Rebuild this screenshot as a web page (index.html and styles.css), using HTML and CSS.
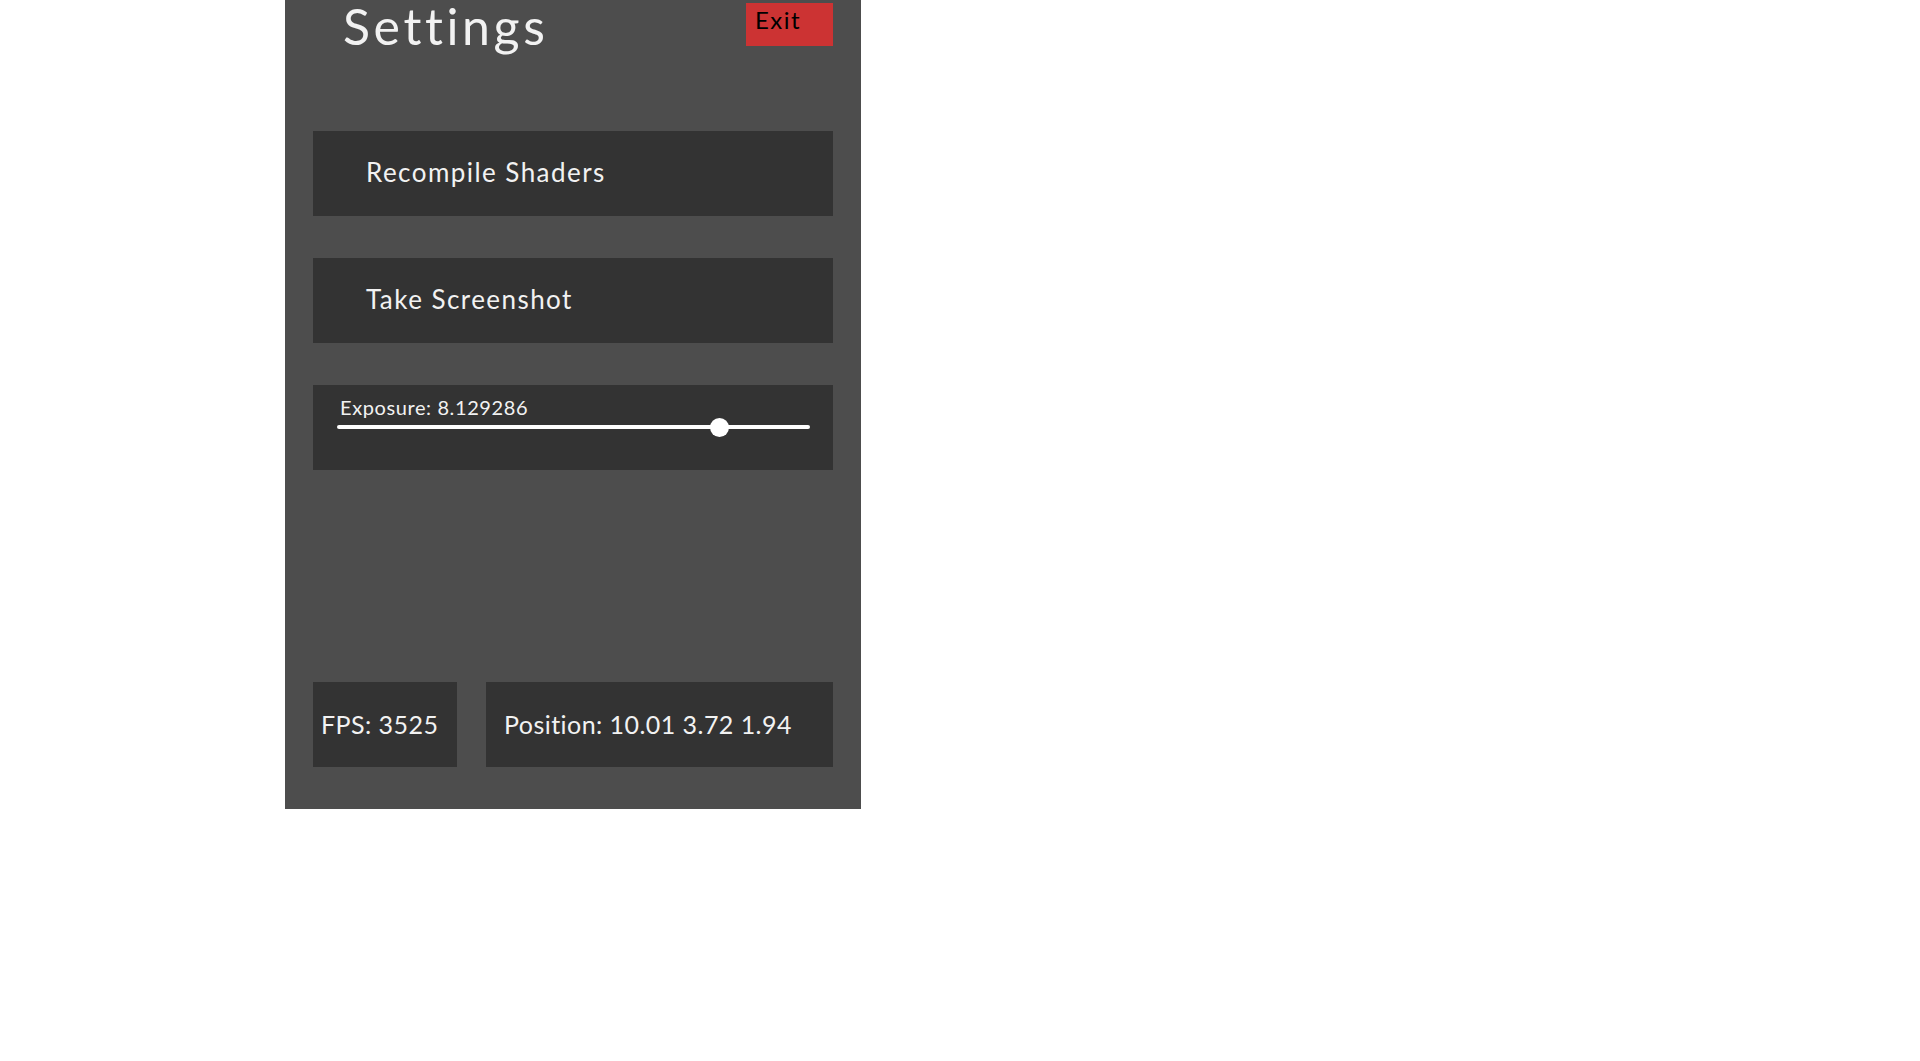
FILE: index.html
```html
<!DOCTYPE html>
<html>
<head>
<meta charset="utf-8">
<link rel="stylesheet" href="styles.css">
</head>
<body>
<div class="panel">
  <div class="header">
    <div class="title">Settings</div>
    <div class="exit">Exit</div>
  </div>
  <div class="btn">Recompile Shaders</div>
  <div class="btn">Take Screenshot</div>
  <div class="slider-box">
    <div class="slider-label">Exposure: 8.129286</div>
    <div class="track"><div class="thumb" style="left: 80.9%"></div></div>
  </div>
  <div class="footer">
    <div class="stat fps">FPS: 3525</div>
    <div class="stat pos">Position: 10.01 3.72 1.94</div>
  </div>
</div>
</body>
</html>
```
FILE: styles.css
```css
html, body {
  margin: 0;
  padding: 0;
  background: #ffffff;
}
body {
  font-family: Lato, "Open Sans", sans-serif;
}
.panel {
  margin-left: 285px;
  width: 576px;
  height: 809px;
  box-sizing: border-box;
  background: #4d4d4d;
  padding: 0 28px 42px 28px;
  display: flex;
  flex-direction: column;
}
.header {
  height: 131px;
  flex: none;
  display: flex;
  justify-content: space-between;
  align-items: flex-start;
}
.title {
  margin-left: 30px;
  color: #f2f2f2;
  font-size: 50px;
  line-height: 52px;
  letter-spacing: 3.6px;
}
.exit {
  margin-top: 3px;
  width: 87px;
  height: 43px;
  box-sizing: border-box;
  background: #cc3333;
  color: #000;
  font-size: 24px;
  line-height: 24px;
  padding: 5px 0 0 9px;
  letter-spacing: 1.5px;
}
.btn {
  flex: none;
  height: 85px;
  box-sizing: border-box;
  background: #333333;
  color: #f2f2f2;
  font-size: 26px;
  line-height: 31px;
  letter-spacing: 1.45px;
  padding: 26px 0 0 53px;
  margin-bottom: 42px;
}
.slider-box {
  flex: none;
  height: 85px;
  background: #333333;
  box-sizing: border-box;
  padding: 10px 23px 0 24px;
}
.slider-label {
  color: #f2f2f2;
  font-size: 20px;
  line-height: 24px;
  letter-spacing: 0.6px;
  padding-left: 3px;
}
.track {
  position: relative;
  margin-top: 6px;
  height: 4px;
  border-radius: 2px;
  background: #ffffff;
}
.thumb {
  position: absolute;
  top: 50%;
  width: 19px;
  height: 19px;
  margin: -9.5px 0 0 -9.5px;
  border-radius: 50%;
  background: #ffffff;
}
.footer {
  margin-top: auto;
  display: flex;
  gap: 29px;
}
.stat {
  height: 85px;
  box-sizing: border-box;
  background: #333333;
  color: #f2f2f2;
  font-size: 25px;
  line-height: 30px;
  letter-spacing: 0.45px;
  padding-top: 27px;
}
.fps {
  width: 144px;
  flex: none;
  padding-left: 8px;
}
.pos {
  flex: 1;
  padding-left: 18px;
}
```
